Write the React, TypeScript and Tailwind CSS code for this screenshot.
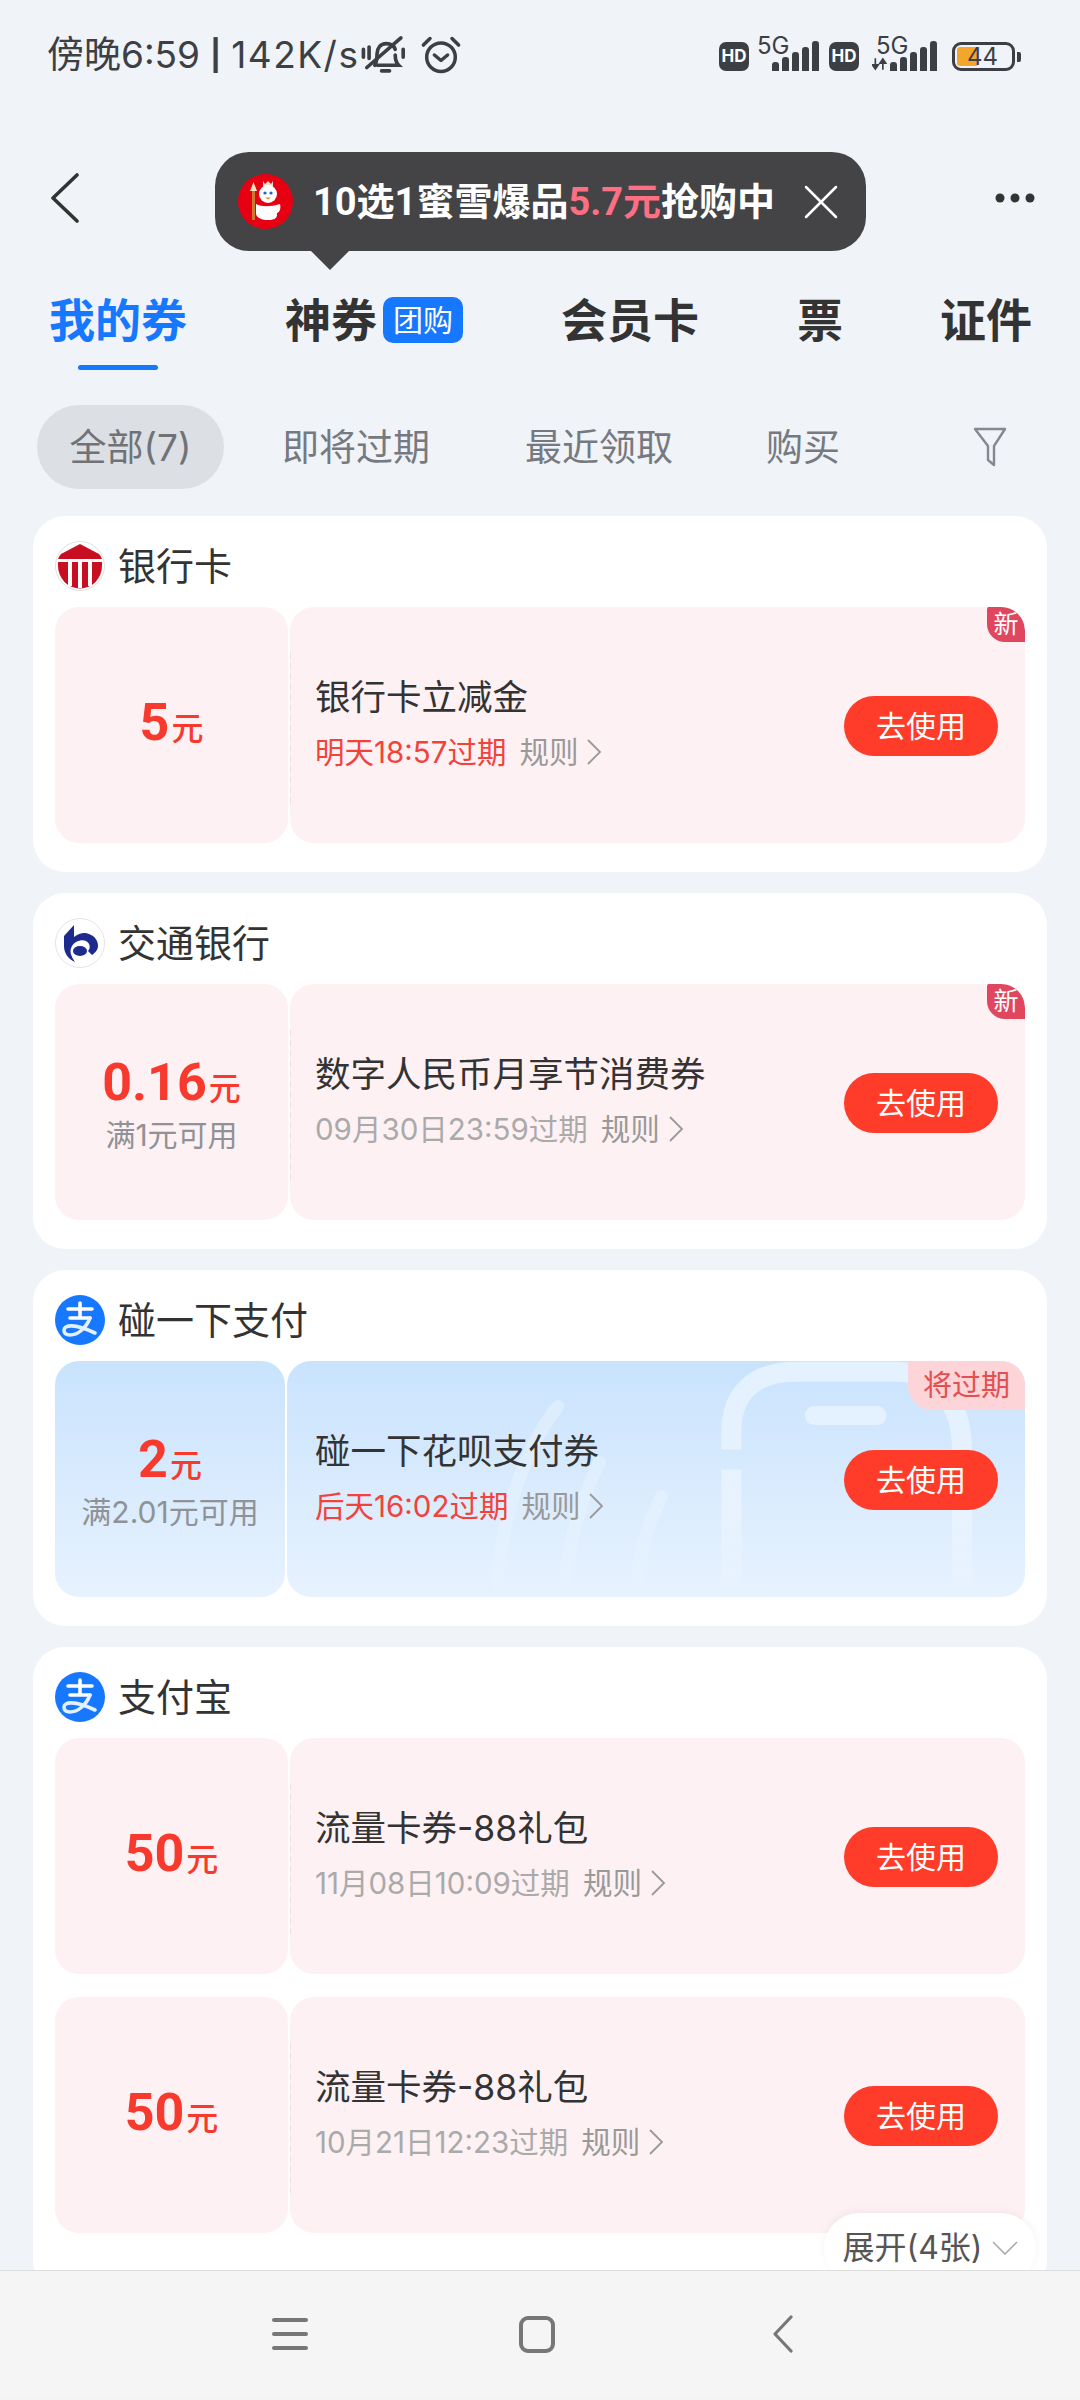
import { X } from 'lucide-react';

type CouponData = {
  amount: string;
  minSpend?: string;
  title: string;
  expiry: string;
  urgent?: boolean;
  tag?: 'new' | 'expiring';
  blue?: boolean;
};

type GroupData = {
  name: string;
  logo: 'bank' | 'bocom' | 'alipay';
  coupons: CouponData[];
};

const groups: GroupData[] = [
  {
    name: '银行卡',
    logo: 'bank',
    coupons: [{ amount: '5', title: '银行卡立减金', expiry: '明天18:57过期', urgent: true, tag: 'new' }],
  },
  {
    name: '交通银行',
    logo: 'bocom',
    coupons: [
      { amount: '0.16', minSpend: '满1元可用', title: '数字人民币月享节消费券', expiry: '09月30日23:59过期', tag: 'new' },
    ],
  },
  {
    name: '碰一下支付',
    logo: 'alipay',
    coupons: [
      {
        amount: '2',
        minSpend: '满2.01元可用',
        title: '碰一下花呗支付券',
        expiry: '后天16:02过期',
        urgent: true,
        tag: 'expiring',
        blue: true,
      },
    ],
  },
  {
    name: '支付宝',
    logo: 'alipay',
    coupons: [
      { amount: '50', title: '流量卡券-88礼包', expiry: '11月08日10:09过期' },
      { amount: '50', title: '流量卡券-88礼包', expiry: '10月21日12:23过期' },
    ],
  },
];

function Signal({ arrows }: { arrows?: boolean }) {
  return (
    <div className="relative flex h-[32px] items-end gap-[3px]">
      {arrows && (
        <svg viewBox="0 0 18 14" className="h-[14px] w-[15px]">
          <path d="M4 0v12M0.5 8 4 13l3.5-5ZM13 14V2M9.5 6 13 1l3.5 5Z" fill="#3c3f44" stroke="#3c3f44" strokeWidth="2" />
        </svg>
      )}
      <span className={`absolute top-[-5px] text-[24px] leading-[24px] text-[#3c3f44] ${arrows ? 'left-[4px]' : 'left-[-15px]'}`}>
        5G
      </span>
      {[9, 14, 19, 24, 30].map((h) => (
        <span key={h} className="w-[7px] rounded-t-[3px] bg-[#3c3f44]" style={{ height: h }} />
      ))}
    </div>
  );
}

function HdBadge() {
  return (
    <span className="flex h-[29px] w-[30px] items-center justify-center rounded-[7px] bg-[#3c3f44] text-[17px] font-bold leading-none text-white">
      HD
    </span>
  );
}

function StatusBar() {
  return (
    <div className="flex h-[150px] items-start justify-between pl-[47px] pr-[65px] pt-[32px] text-[#3c3f44]">
      <div className="flex items-center text-[37px] leading-[44px]">
        <span>傍晚6:59</span>
        <span className="ml-[10px] text-[30px] font-bold">|</span>
        <span className="ml-[10px] tracking-[1.5px]">142K/s</span>
        <svg viewBox="0 0 44 40" fill="none" stroke="#3c3f44" strokeWidth="3.2" strokeLinecap="round" className="ml-[1px] h-[46px] w-[50px]">
          <path d="M13 29c2-3 2-6 2-10 0-5 3-9 8-9s7 2 8 5M31 20c0 4 1 7 3 9H15" />
          <path d="M19 34h7M6 31 36 5M3 15v7M8 13v10M38 15v7" />
        </svg>
        <svg viewBox="0 0 40 40" fill="none" stroke="#3c3f44" strokeWidth="3.2" strokeLinecap="round" strokeLinejoin="round" className="ml-[9px] h-[44px] w-[44px]">
          <circle cx="20" cy="22" r="13" />
          <path d="M14 20l6 5 6-5M4 11l6-6M36 11l-6-6" />
        </svg>
      </div>
      <div className="mt-[7px] flex items-end">
        <HdBadge />
        <div className="ml-[23px]">
          <Signal />
        </div>
        <div className="ml-[10px]">
          <HdBadge />
        </div>
        <div className="ml-[13px]">
          <Signal arrows />
        </div>
        <div className="relative ml-[15px] flex h-[29px] w-[63px] items-center rounded-[9px] border-[3px] border-[#3c3f44] p-[2px]">
          <span className="h-full w-[20px] rounded-l-[3px] bg-[#f3a62c]" />
          <span className="absolute left-[12px] text-[24px] leading-none text-[#3c3f44]">44</span>
          <span className="absolute right-[-9px] h-[10px] w-[4px] rounded-r-[2px] bg-[#3c3f44]" />
        </div>
      </div>
    </div>
  );
}

function SnowmanLogo() {
  return (
    <svg viewBox="0 0 55 55" className="h-[55px] w-[55px] shrink-0">
      <circle cx="27.5" cy="27.5" r="27.5" fill="#e60012" />
      <rect x="14" y="16" width="3" height="30" fill="#c97a2c" />
      <path d="M12 17l3.5-9 3.5 9Z" fill="#f6e3bd" />
      <path d="M25 7l2 3 3-3 3 3 2-3v6H25Z" fill="#eadfc8" />
      <circle cx="30" cy="20" r="9" fill="#fff" />
      <circle cx="27" cy="19" r="1.6" fill="#2a62c8" />
      <circle cx="33" cy="19" r="1.6" fill="#2a62c8" />
      <path d="M27 23.5h6l-3 2Z" fill="#f08a1d" />
      <path d="M18 30c6 3 14 3 24 0 1 4 0 8-3 9v2c0 3-3 5-9 5s-11-2-12-6Z" fill="#fff" />
    </svg>
  );
}

function PromoTooltip() {
  return (
    <div className="absolute left-[215px] top-[152px] z-10 flex h-[99px] w-[651px] items-center rounded-[34px] bg-[#444446] pl-[23px]">
      <SnowmanLogo />
      <p className="ml-[20px] whitespace-nowrap font-['Roboto','Noto_Sans_CJK_SC',sans-serif] text-[38px] font-bold leading-none text-white">
        10选1蜜雪爆品<span className="text-[#ff6f83]">5.7元</span>抢购中
      </p>
      <X className="ml-[16px] h-[60px] w-[60px] text-white" strokeWidth={1} />
      <span className="absolute left-[95px] top-[98px] h-0 w-0 border-x-[20px] border-t-[20px] border-x-transparent border-t-[#444446]" />
    </div>
  );
}

function Tabs() {
  return (
    <div className="flex h-[125px] items-start gap-[98px] pl-[49px] pt-[49px] text-[46px] font-bold leading-[50px] text-[#333]">
      <div className="relative text-[#1677ff]">
        我的券
        <span className="absolute left-[29px] top-[70px] h-[5px] w-[80px] rounded-full bg-[#1677ff]" />
      </div>
      <div className="flex items-center">
        神券
        <span className="ml-[6px] flex h-[46px] w-[80px] items-center justify-center rounded-[10px] bg-[#1677ff] text-[30px] font-normal leading-none text-white">
          团购
        </span>
      </div>
      <div>会员卡</div>
      <div>票</div>
      <div className="-ml-[1px]">证件</div>
    </div>
  );
}

function Filters() {
  return (
    <div className="mt-[34px] flex h-[84px] items-center pl-[37px] text-[37px] leading-none text-[#767a80]">
      <div className="flex h-[84px] w-[187px] items-center justify-center rounded-[42px] bg-[#dcdfe3] text-[#6f7378]">全部(7)</div>
      <span className="ml-[58px]">即将过期</span>
      <span className="ml-[95px]">最近领取</span>
      <span className="ml-[93px] w-[76px] overflow-hidden whitespace-nowrap">购买方式</span>
      <svg viewBox="0 0 34 40" fill="none" stroke="#85898f" strokeWidth="2.4" strokeLinejoin="round" className="ml-[131px] h-[40px] w-[34px]">
        <path d="M2 2h30L21 19v19l-6-5V19Z" />
      </svg>
    </div>
  );
}

function GroupLogo({ kind }: { kind: GroupData['logo'] }) {
  if (kind === 'bank') {
    return (
      <svg viewBox="0 0 50 50" className="h-[50px] w-[50px] shrink-0">
        <circle cx="25" cy="25" r="24.5" fill="#fff" stroke="#e0e0e0" />
        <path d="M25 3 44 13q2 2 3 5H3q1-3 3-5Z" fill="#c80f22" />
        <path d="M3 21h44v4a22 22.5 0 0 1-44 0Z" fill="#c80f22" />
        <path d="M13 21h4v24h-4ZM23 21h4v26h-4ZM33 21h4v24h-4Z" fill="#fff" />
      </svg>
    );
  }
  if (kind === 'bocom') {
    return (
      <svg viewBox="0 0 50 50" className="h-[50px] w-[50px] shrink-0">
        <circle cx="25" cy="25" r="24.5" fill="#fff" stroke="#e3e3e3" />
        <path
          d="M9 18 19 7v12c5-4 11-5 15-3 6 2 9 7 9 12 0 4-3 7-6 9l-4-4c3-3 2-8-2-10-4-2-11 0-14 5-3 5-1 10 3 16-7-3-11-9-11-16Z"
          fill="#1d2a8e"
        />
        <ellipse cx="25" cy="33" rx="7" ry="5" fill="#1d2a8e" />
      </svg>
    );
  }
  return (
    <svg viewBox="0 0 50 50" fill="none" className="h-[50px] w-[50px] shrink-0">
      <circle cx="25" cy="25" r="25" fill="#1677ff" />
      <path d="M13 14h24M25 8v15M15 23h20" stroke="#fff" strokeWidth="3.6" strokeLinecap="round" />
      <path d="M35 23c-4 10-12 17-20 17-4 0-6-2-6-5 0-5 10-7 31 3" stroke="#e3f0ff" strokeWidth="3.6" strokeLinecap="round" />
    </svg>
  );
}

function PhoneWatermark() {
  return (
    <svg viewBox="0 0 739 235" fill="none" className="absolute inset-0 h-full w-full">
      <defs>
        <linearGradient id="phoneFade" gradientUnits="userSpaceOnUse" x1="0" y1="0" x2="0" y2="235">
          <stop offset="0" stopColor="#fff" stopOpacity="0.5" />
          <stop offset="0.6" stopColor="#fff" stopOpacity="0.35" />
          <stop offset="1" stopColor="#fff" stopOpacity="0.05" />
        </linearGradient>
      </defs>
      <g stroke="url(#phoneFade)">
        <path d="M445 88V70C445 30 470 10 510 10H610C650 10 676 40 676 90V225" strokeWidth="20" />
        <path d="M445 108V225" strokeWidth="20" />
        <path d="M528 54H591" strokeWidth="19" strokeLinecap="round" />
        <path d="M271 45C235 90 215 160 210 225M313 101C295 135 282 180 278 225M375 135C360 165 352 195 351 225" strokeWidth="13" strokeLinecap="round" strokeOpacity="0.6" />
      </g>
    </svg>
  );
}

function Coupon({ coupon }: { coupon: CouponData }) {
  const surface = coupon.blue ? 'bg-gradient-to-b from-[#c9e3fd] to-[#e7f2fe]' : 'bg-[#fef1f3]';

  return (
    <div className="flex h-[236px]">
      <div
        className={`flex shrink-0 flex-col items-center justify-center rounded-[24px] ${surface} ${
          coupon.blue ? 'w-[230px]' : 'w-[233px]'
        }`}
      >
        <p
          className={`font-['Roboto','Noto_Sans_CJK_SC',sans-serif] text-[52px] font-bold text-[#f73a2d] ${
            coupon.minSpend ? 'leading-[64px]' : 'mt-[2px] leading-[56px]'
          }`}
        >
          {coupon.amount}
          <span className="ml-[2px] text-[32px] font-medium">元</span>
        </p>
        {coupon.minSpend && <p className="-mt-[4px] whitespace-nowrap text-[30px] leading-[36px] text-[#8f9296]">{coupon.minSpend}</p>}
      </div>
      <div
        className={`relative ml-[2px] flex flex-1 items-center overflow-hidden rounded-[24px] pr-[27px] ${surface} ${
          coupon.blue ? 'pl-[28px]' : 'pl-[25px]'
        }`}
      >
        {coupon.blue && <PhoneWatermark />}
        {!coupon.blue && <span className="absolute left-[-1px] top-[46px] h-[150px] border-l-2 border-dashed border-[#fbd9de]" />}
        <div className="relative mb-[4px] flex-1">
          <p className="whitespace-nowrap text-[35.5px] leading-[48px] text-[#333]">{coupon.title}</p>
          <div className="mt-[10px] flex items-center text-[29.5px] leading-[40px] text-[#999]">
            <span className={coupon.urgent ? 'text-[#f3423a]' : 'text-[#aaa]'}>{coupon.expiry}</span>
            <span className="ml-[13px]">规则</span>
            <svg viewBox="0 0 16 28" fill="none" stroke="#999" strokeWidth="1.8" className="ml-[8px] h-[28px] w-[16px]">
              <path d="M2 2 14 14 2 26" />
            </svg>
          </div>
        </div>
        <div className="relative mt-[2px] flex h-[60px] w-[154px] items-center justify-center rounded-[30px] bg-[#ff3b2a] text-[30px] leading-none text-white">
          去使用
        </div>
        {coupon.tag === 'new' && (
          <span className="absolute right-0 top-[-1px] flex h-[36px] w-[38px] items-center justify-center rounded-bl-[18px] rounded-tl-[4px] rounded-tr-[24px] bg-[#e0475f] text-[25px] leading-none text-white">
            新
          </span>
        )}
        {coupon.tag === 'expiring' && (
          <span className="absolute right-0 top-0 flex h-[49px] w-[117px] items-center justify-center rounded-bl-[24px] bg-[#fdd5d8] text-[29px] leading-none text-[#e2504f]">
            将过期
          </span>
        )}
      </div>
    </div>
  );
}

function Group({ group, last }: { group: GroupData; last: boolean }) {
  return (
    <section className={`relative rounded-[32px] bg-white px-[22px] ${last ? 'pb-[60px]' : 'pb-[29px]'}`}>
      <header className="flex h-[91px] items-center pt-[8px]">
        <GroupLogo kind={group.logo} />
        <h2 className="ml-[13px] text-[38px] font-normal leading-none text-[#333]">{group.name}</h2>
      </header>
      <div className="flex flex-col gap-[23px]">
        {group.coupons.map((coupon, index) => (
          <Coupon key={index} coupon={coupon} />
        ))}
      </div>
      {last && (
        <div className="absolute left-[791px] top-[566px] flex h-[70px] w-[212px] items-center justify-center rounded-[35px] bg-white text-[32px] leading-none text-[#555] shadow-[0_-2px_8px_rgba(0,0,0,0.05)]">
          展开(4张)
          <svg viewBox="0 0 26 14" fill="none" stroke="#aaa" strokeWidth="1.6" className="ml-[9px] h-[14px] w-[26px]">
            <path d="M1 1 13 13 25 1" />
          </svg>
        </div>
      )}
    </section>
  );
}

function NavBar() {
  return (
    <div className="flex h-[129px] items-center justify-center gap-[211px] border-t border-[#dedede] bg-[#f5f5f5] pb-[2px] pr-[14px]">
      <svg viewBox="0 0 36 34" className="h-[34px] w-[36px]" fill="none" stroke="#777" strokeWidth="4" strokeLinecap="round">
        <path d="M2 3h32M2 17h32M2 31h32" />
      </svg>
      <div className="h-[37px] w-[36px] rounded-[9px] border-[4px] border-[#777]" />
      <svg viewBox="0 0 22 38" className="ml-[6px] h-[38px] w-[22px]" fill="none" stroke="#777" strokeWidth="3.2" strokeLinecap="round" strokeLinejoin="round">
        <path d="M19 2 3 19 19 36" />
      </svg>
    </div>
  );
}

export default function App() {
  return (
    <div className="relative flex h-[2400px] w-[1080px] flex-col overflow-hidden bg-[#f0f3f8] font-['Inter','Noto_Sans_CJK_SC',sans-serif]">
      <div className="h-[2270px] overflow-hidden">
        <StatusBar />
        <div className="flex h-[96px] items-center justify-between pl-[50px] pr-[45px]">
          <svg viewBox="0 0 30 50" fill="none" stroke="#333" strokeWidth="3.6" strokeLinecap="round" strokeLinejoin="round" className="h-[50px] w-[30px]">
            <path d="M27 2 3 25 27 48" />
          </svg>
          <svg viewBox="0 0 40 10" fill="#333" className="h-[10px] w-[40px]">
            <circle cx="5" cy="5" r="4.5" />
            <circle cx="20" cy="5" r="4.5" />
            <circle cx="35" cy="5" r="4.5" />
          </svg>
        </div>
        <Tabs />
        <Filters />
        <main className="mt-[27px] flex flex-col gap-[21px] px-[33px]">
          {groups.map((group, index) => (
            <Group key={group.name} group={group} last={index === groups.length - 1} />
          ))}
        </main>
      </div>
      <PromoTooltip />
      <NavBar />
    </div>
  );
}
